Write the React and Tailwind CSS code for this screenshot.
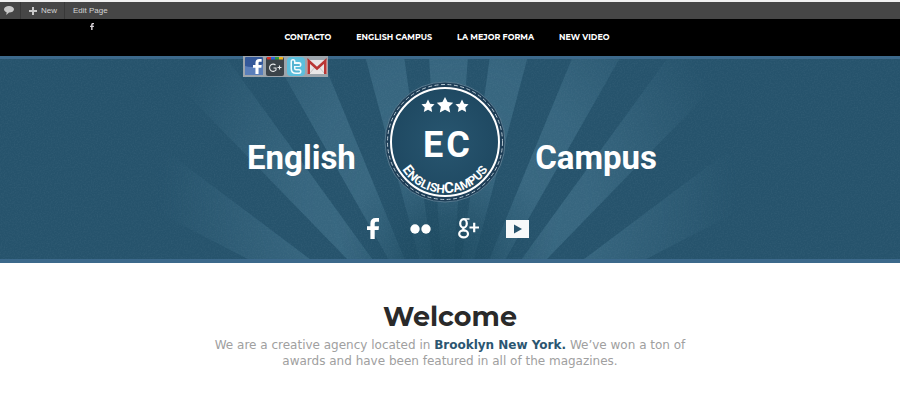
import React from "react";

const NAV = ["CONTACTO", "ENGLISH CAMPUS", "LA MEJOR FORMA", "NEW VIDEO"];

const F_PATH =
  "M3.4 21V12H0V8.2h3.4V5.4C3.4 1.9 5.3 0 8.6 0H12v3.8H9.6C8.2 3.8 7.7 4.4 7.7 5.6v2.6H12L11.6 12H7.7v9z";

function Sunburst() {
  return (
    <svg
      className="absolute inset-0 h-full w-full"
      viewBox="0 0 900 207"
      preserveAspectRatio="xMidYMid slice"
      aria-hidden="true"
    >
      <defs>
        <radialGradient id="fade" gradientUnits="userSpaceOnUse" cx="447" cy="150" r="290">
          <stop offset="0" stopColor="#fff" />
          <stop offset="0.5" stopColor="#fff" stopOpacity="0.85" />
          <stop offset="1" stopColor="#fff" stopOpacity="0" />
        </radialGradient>
        <mask id="rayMask">
          <rect width="900" height="207" fill="url(#fade)" />
        </mask>
        <radialGradient id="floor" gradientUnits="userSpaceOnUse" cx="447" cy="205" r="110">
          <stop offset="0" stopColor="#1d4a60" stopOpacity="0.95" />
          <stop offset="0.4" stopColor="#1f4c63" stopOpacity="0.7" />
          <stop offset="1" stopColor="#25536c" stopOpacity="0" />
        </radialGradient>
        <filter id="grain" x="0" y="0" width="100%" height="100%">
          <feTurbulence type="fractalNoise" baseFrequency="0.7" numOctaves="2" />
          <feColorMatrix values="0 0 0 0 0.8  0 0 0 0 0.9  0 0 0 0 1  0.5 0 0 0 -0.19" />
        </filter>
      </defs>
      <rect width="900" height="207" fill="#26536c" />
      <g fill="#3a6982" mask="url(#rayMask)">
        <path d="M429 0h39L447 306z" />
        <path d="M365 0h39l43 306z" />
        <path d="M490 0h38l-81 306z" />
        <path d="M273 0h48l126 306z" />
        <path d="M573 0h48L447 306z" />
        <path d="M150 0h75l222 306z" />
        <path d="M669 0h75L447 306z" />
        <path d="M150 83L60 106 447 306z" />
        <path d="M744 83l90 23L447 306z" />
      </g>
      <rect x="330" y="90" width="240" height="117" fill="url(#floor)" />
      <rect width="900" height="207" filter="url(#grain)" opacity="0.18" />
    </svg>
  );
}

function Star({ x, y, s }) {
  return (
    <path
      transform={`translate(${x} ${y}) scale(${s})`}
      d="M0-8l2.6 5.1 5.6.7L4.1 1.8 5.2 7.500 0 4.800-5.200 7.500-4.100 1.800-8.200-2.200-2.600-2.900z"
      fill="#fff"
    />
  );
}

function Badge() {
  return (
    <svg
      className="shrink-0"
      width="122"
      height="122"
      viewBox="-61 -61 122 122"
      role="img"
      aria-label="English Campus badge"
    >
      <defs>
        <radialGradient id="disc">
          <stop offset="0" stopColor="#285670" />
          <stop offset="1" stopColor="#1f4962" />
        </radialGradient>
        <path id="arc" d="M-51 0A51 51 0 0 0 51 0" />
      </defs>
      <circle r="60" fill="#1e3e57" stroke="#587b90" strokeWidth="1" />
      <circle r="57.500" fill="none" stroke="#b4c5cf" strokeWidth="1" strokeDasharray="4 2.5" />
      <circle r="54" fill="url(#disc)" stroke="#fff" strokeWidth="2" />
      <Star x={-17} y={-36} s={0.8} />
      <Star x={0} y={-37} s={1} />
      <Star x={17} y={-36} s={0.8} />
      <g fill="#fff" fontWeight="700" fontFamily="Roboto, sans-serif">
        <text x="-12" y="15" fontSize="36" textAnchor="middle">E</text>
        <text x="13" y="15" fontSize="36" textAnchor="middle">C</text>
        <text fontSize="12">
          <textPath href="#arc" startOffset="50%" textAnchor="middle">
            <tspan fontSize="14">E</tspan>NGLISH<tspan fontSize="15">C</tspan>AMPUS
          </textPath>
        </text>
      </g>
    </svg>
  );
}

function ShareStrip() {
  return (
    <div className="flex h-[21px] w-[85px] items-center gap-px bg-[#9da5ac] px-px">
      <a href="#facebook" aria-label="Share on Facebook">
        <svg width="20" height="19" viewBox="0 0 20 19">
          <rect x="1" width="18" height="18" rx="1" fill="#35599a" />
          <path d="M1 9c6 2 12 1 18-2v11H1z" fill="#5b7fba" />
          <path transform="translate(9 2) scale(.72)" d={F_PATH} fill="#fff" />
        </svg>
      </a>
      <a href="#google" aria-label="Share on Google Plus">
        <svg width="20" height="19" viewBox="0 0 20 19">
          <rect x="1" width="18" height="19" rx="2" fill="#3b4349" />
          <path d="M2 0h4v2.500H2z" fill="#d93025" />
          <path d="M6 0h4v2.500H6z" fill="#2d62d8" />
          <path d="M10 0h4v2.500h-4z" fill="#2f9a3c" />
          <path d="M14 0h4v2.500h-4z" fill="#f0b51d" />
          <path d="M10.500 8A3.600 3.600 0 1 0 11 13v-2H8.500M12.500 10.500h4M14.500 8.500v4" fill="none" stroke="#e8eaeb" strokeWidth="1.100" />
        </svg>
      </a>
      <a href="#twitter" aria-label="Share on Twitter">
        <svg width="20" height="19" viewBox="0 0 20 19">
          <rect x="1" width="18" height="19" rx="4" fill="#5cbfdd" />
          <path d="M7 4.500V11.500q0 3 3 3H13M7 7.500H13" fill="none" stroke="#f4fbfd" strokeWidth="5" strokeLinecap="round" strokeLinejoin="round" />
          <path d="M7 4.500V11.500q0 3 3 3H13M7 8H13" fill="none" stroke="#58b4d2" strokeWidth="2" strokeLinecap="round" />
        </svg>
      </a>
      <a href="#gmail" aria-label="Share by Gmail">
        <svg width="20" height="19" viewBox="0 0 20 19">
          <rect y="3" width="20" height="14" rx="1" fill="#e9e6e6" />
          <path d="M3 16l5-6M17 16l-5-6" stroke="#c9c4c4" />
          <path d="M1.700 17V4L10 11.500 18.300 4v13" fill="none" stroke="#b93634" strokeWidth="2.600" />
        </svg>
      </a>
    </div>
  );
}

function HeroIcons() {
  return (
    <div className="flex h-[21px] items-center justify-center gap-[31px] pr-1">
      <a href="#fb" aria-label="Facebook">
        <svg width="12" height="21" viewBox="0 0 12 21" fill="#fff"><path d={F_PATH} /></svg>
      </a>
      <a href="#flickr" aria-label="Flickr">
        <svg width="21" height="10" viewBox="0 0 21 10" fill="#fff">
          <circle cx="5" cy="5" r="4.700" /><circle cx="16" cy="5" r="4.700" />
        </svg>
      </a>
      <a href="#gplus" aria-label="Google Plus" className="-ml-1">
        <svg width="21" height="21" viewBox="0 0 21 21" fill="none" stroke="#fff">
          <ellipse cx="5.500" cy="5.400" rx="3.300" ry="4.200" strokeWidth="2.200" />
          <path d="M5.500 1H11.500" strokeWidth="1.400" />
          <path d="M6 9.500c-1.800 1.500-.8 2.500.8 3.300" strokeWidth="2" />
          <ellipse cx="5.600" cy="15.900" rx="4.400" ry="3.500" strokeWidth="2.200" />
          <path d="M11.500 9.500H21M16.200 4.800v9.400" strokeWidth="2.200" />
        </svg>
      </a>
      <a href="#video" aria-label="Video" className="-ml-1">
        <svg width="23" height="18" viewBox="0 0 23 18">
          <path d="M0 0h23v18H0z" fill="#f7f9fa" /><path d="M8 4.500l8 4.500-8 4.500z" fill="#27536c" />
        </svg>
      </a>
    </div>
  );
}

export default function App() {
  return (
    <div className="bg-white font-['Liberation_Sans',Arial,sans-serif]">
      <div className="flex h-[19px] items-stretch border-t-2 border-[#f1f1f1] bg-[#464646] text-[8px] text-[#d4d4d4]">
        <a href="#comments" aria-label="Comments" className="flex w-[21px] items-center border-r border-[#383838] pl-1">
          <svg width="10" height="9" viewBox="0 0 10 9" fill="#c9c9c9">
            <path d="M5 0C7.800 0 10 1.300 10 3.300S7.800 6.600 5 6.600L2.300 9 2.600 6.200C1 5.700 0 4.600 0 3.300 0 1.300 2.200 0 5 0z" />
          </svg>
        </a>
        <a href="#new" className="flex w-11 items-center gap-1 border-r border-[#383838] pl-2">
          <svg width="8" height="8" viewBox="0 0 8 8"><path d="M4 0v8M0 4h8" stroke="#c9c9c9" strokeWidth="2" /></svg>
          New
        </a>
        <a href="#edit" className="flex items-center pl-2">Edit Page</a>
      </div>

      <header className="grid h-[37px] grid-cols-[1fr_auto_1fr] bg-black pr-24 pl-[90px]">
        <a href="#fb-page" aria-label="Facebook page" className="pt-1">
          <svg width="4" height="7" viewBox="0 0 12 21" fill="#d8d2d6"><path d={F_PATH} /></svg>
        </a>
        <nav className="flex gap-[25px] pt-3 font-['Montserrat','Inter',sans-serif] text-[8px] leading-3 font-bold text-white">
          {NAV.map((n) => (
            <a key={n} href="#nav">{n}</a>
          ))}
        </nav>
      </header>

      <section className="relative overflow-hidden pb-6">
        <Sunburst />
        <div className="absolute inset-0 border-t-[3px] border-b-4 border-[#3c698b]" />
        <div className="relative mx-auto flex max-w-[414px] flex-col">
          <ShareStrip />
          <div className="mt-1 flex items-center justify-between pl-1 font-['Roboto',sans-serif] text-[33px] leading-10 font-bold text-white">
            <span className="pt-8">English</span>
            <Badge />
            <span className="pt-8">Campus</span>
          </div>
          <div className="mt-[15px]"><HeroIcons /></div>
        </div>
      </section>

      <main className="mx-auto max-w-[500px] pt-9 text-center">
        <h1 className="font-['Montserrat','Inter',sans-serif] text-[27px] leading-[36px] font-bold text-[#2a2a2a]">Welcome</h1>
        <p className="mt-[2px] font-['Verdana','DejaVu_Sans',sans-serif] text-[12px] leading-4 text-[#a0a0a0]">
          We are a creative agency located in <strong className="text-[#2b5671]">Brooklyn New York.</strong> We’ve won a ton of
          <br />
          awards and have been featured in all of the magazines.
        </p>
      </main>
    </div>
  );
}
